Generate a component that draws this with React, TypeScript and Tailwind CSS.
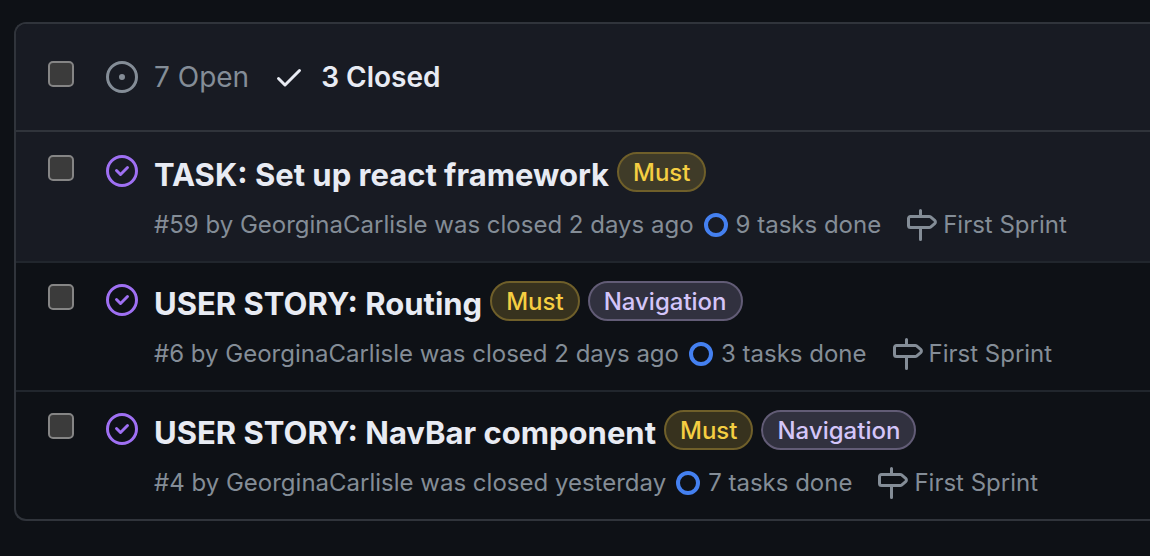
import type { ReactNode } from "react";

const ICONS = {
  open: "M8 9.5a1.5 1.5 0 1 0 0-3 1.5 1.5 0 0 0 0 3ZM8 0a8 8 0 1 1 0 16A8 8 0 0 1 8 0ZM1.5 8a6.5 6.5 0 1 0 13 0 6.5 6.5 0 0 0-13 0Z",
  closed:
    "M11.28 6.78a.75.75 0 0 0-1.06-1.06L7.25 8.69 5.78 7.22a.75.75 0 0 0-1.06 1.06l2 2a.75.75 0 0 0 1.06 0l3.5-3.5ZM16 8A8 8 0 1 1 0 8a8 8 0 0 1 16 0Zm-1.5 0a6.5 6.5 0 1 0-13 0 6.5 6.5 0 0 0 13 0Z",
  check:
    "M13.78 4.22a.75.75 0 0 1 0 1.06l-7.25 7.25a.75.75 0 0 1-1.06 0L2.22 9.28a.751.751 0 0 1 .018-1.042.751.751 0 0 1 1.042-.018L6 10.94l6.72-6.72a.75.75 0 0 1 1.06 0Z",
  milestone:
    "M7.75 0a.75.75 0 0 1 .75.75V3h3.634c.414 0 .814.147 1.13.414l2.07 1.75a1.75 1.75 0 0 1 0 2.672l-2.07 1.75a1.75 1.75 0 0 1-1.13.414H8.5v5.25a.75.75 0 0 1-1.5 0V10H2.75A1.75 1.75 0 0 1 1 8.25v-3.5C1 3.784 1.784 3 2.75 3H7V.75A.75.75 0 0 1 7.75 0Zm4.384 8.5a.25.25 0 0 0 .161-.06l2.07-1.75a.248.248 0 0 0 0-.38l-2.07-1.75a.25.25 0 0 0-.161-.06H2.75a.25.25 0 0 0-.25.25v3.5c0 .138.112.25.25.25h9.384Z",
};

function Icon({ name, className = "" }: { name: keyof typeof ICONS; className?: string }) {
  return (
    <svg viewBox="0 0 16 16" aria-hidden="true" className={`size-8 shrink-0 fill-current ${className}`}>
      <path d={ICONS[name]} />
    </svg>
  );
}

function Checkbox({ label }: { label: string }) {
  return (
    <input
      type="checkbox"
      aria-label={label}
      className="size-[26px] shrink-0 appearance-none rounded-[5px] border-2 border-[#858585] bg-[#3b3b3b] checked:bg-[#4480f0]"
    />
  );
}

const LABEL_STYLES = {
  Must: "border-[#6f5f2a] bg-[#f5ce42]/18 text-[#f5ce42]",
  Navigation: "border-[#625c76] bg-[#d4c5f9]/18 text-[#d4c5f9]",
};

type LabelName = keyof typeof LABEL_STYLES;

function Label({ name }: { name: LabelName }) {
  return (
    <a
      href="#label"
      className={`flex h-10 items-center rounded-full border-2 px-3.5 pt-0.5 text-[24px] leading-6 font-medium ${LABEL_STYLES[name]}`}
    >
      {name}
    </a>
  );
}

interface Issue {
  id: number;
  title: string;
  closed: string;
  tasks: number;
  labels: LabelName[];
}

const ISSUES: Issue[] = [
  { id: 59, title: "TASK: Set up react framework", closed: "2 days ago", tasks: 9, labels: ["Must"] },
  { id: 6, title: "USER STORY: Routing", closed: "2 days ago", tasks: 3, labels: ["Must", "Navigation"] },
  { id: 4, title: "USER STORY: NavBar component", closed: "yesterday", tasks: 7, labels: ["Must", "Navigation"] },
];

function Meta({ children }: { children: ReactNode }) {
  return <span className="whitespace-nowrap">{children}</span>;
}

function IssueRow({ issue }: { issue: Issue }) {
  return (
    <li className="flex items-start border-t-2 border-[#21262d] pt-[18px] pb-[17px] pl-8 first:border-transparent first:bg-[#181b23]">
      <div className="flex items-start gap-8 pt-[3px]">
        <Checkbox label={`Select ${issue.title}`} />
        <Icon name="closed" className="text-[#9f70f3]" />
      </div>
      <div className="ml-4 min-w-0">
        <div className="flex items-start gap-2">
          <a href="#issue" className="whitespace-nowrap text-[31px] leading-[46px] font-bold text-[#e8ebf3]">
            {issue.title}
          </a>
          {issue.labels.map((name) => (
            <Label key={name} name={name} />
          ))}
        </div>
        <div className="mt-2 flex items-center text-[24px] leading-[38px] text-[#848d97]">
          <Meta>
            #{issue.id} by <a href="#author">GeorginaCarlisle</a> was closed {issue.closed}
          </Meta>
          <span className="ml-2.5 size-6 rounded-full border-4 border-[#4480f0]" />
          <span className="ml-2">
            <Meta>{issue.tasks} tasks done</Meta>
          </span>
          <a href="#milestone" className="ml-6 flex items-center gap-1.5">
            <Icon name="milestone" />
            <Meta>First Sprint</Meta>
          </a>
        </div>
      </div>
    </li>
  );
}

export default function App() {
  return (
    <main className="min-h-screen overflow-hidden bg-[#0e1116] pt-[22px] pb-[35px] pl-3.5 font-['Inter',sans-serif]">
      <section className="overflow-hidden rounded-l-xl border-2 border-r-0 border-[#30343b]">
        <header className="flex items-start border-b-2 border-[#30343b] bg-[#181b23] py-[37px] pl-8 text-[28px] leading-8">
          <Checkbox label="Select all issues" />
          <a href="#open" className="ml-8 flex items-center gap-4 text-[#848d97]">
            <Icon name="open" />
            7 Open
          </a>
          <a href="#closed" className="ml-6 flex items-center gap-4 font-semibold text-[#e8ebf3]">
            <Icon name="check" />
            3 Closed
          </a>
        </header>
        <ul>
          {ISSUES.map((issue) => (
            <IssueRow key={issue.id} issue={issue} />
          ))}
        </ul>
      </section>
    </main>
  );
}
